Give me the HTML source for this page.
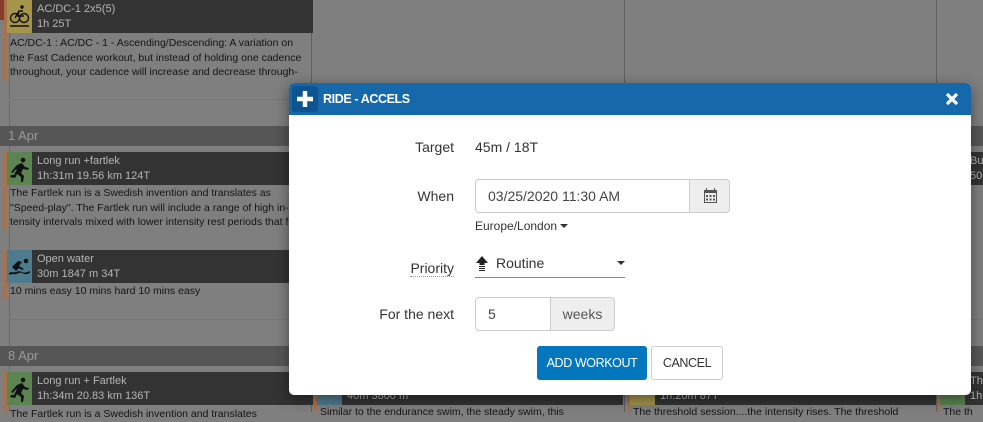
<!DOCTYPE html>
<html style="background:#7f7f7f"><head><meta charset="utf-8"><style>
*{box-sizing:border-box;margin:0;padding:0}
html,body{background:#7f7f7f}
body{width:983px;height:412px;overflow:hidden;font-family:"Liberation Sans",Arial,sans-serif;position:relative}
.a{position:absolute}
.vl{position:absolute;top:0;width:1px;height:412px;background:#5f5f5f}
.day{position:absolute;left:0;width:983px;height:20px;background:#565656;color:#9a9a9a;font-size:13px;line-height:20px;padding-left:8px}
.bar{position:absolute;width:3px;background:#a8714a}
.ch{position:absolute;height:33px;background:#333;color:#b5b5b5;font-size:11px;line-height:15px;padding:2px 0 0 30px;white-space:nowrap;overflow:hidden}
.ic{position:absolute;left:0;top:0;width:25px;height:33px}
.bt{position:absolute;color:#141414;font-size:10.5px;line-height:14.5px;white-space:nowrap;overflow:hidden}
.hl{position:absolute;height:1px;background:#767676}
</style></head><body>
<div class="a" style="left:0;top:0;width:983px;height:412px;background:#7f7f7f"></div>
<div class="vl" style="left:9px;background:#6a6a6a"></div>
<div class="vl" style="left:311px"></div>
<div class="vl" style="left:624px"></div>
<div class="vl" style="left:936px"></div>
<div class="a" style="left:0;top:0;width:4px;height:20px;background:#8a3a2a"></div>
<div class="hl" style="left:9px;top:99px;width:302px"></div>
<div class="hl" style="left:9px;top:319px;width:302px"></div>
<div class="hl" style="left:936px;top:319px;width:47px"></div>

<div class="bar" style="left:4px;top:0;height:79px"></div>
<div class="ch" style="left:7px;top:0;width:306px"><div class="ic" style="background:#a5954a"><svg width="25" height="33" viewBox="0 0 25 33"><g fill="none" stroke="#111" stroke-width="1.4"><circle cx="8" cy="18" r="4.5"/><circle cx="17" cy="18" r="4.5"/><path d="M8 18l4-7h4M12 11l-1 5h6"/><path d="M3 26h19"/></g><circle cx="15" cy="7" r="1.7" fill="#111"/></svg></div>AC/DC-1 2x5(5)<br>1h 25T</div>
<div class="bt" style="left:10px;top:36px;width:300px">AC/DC-1 : AC/DC - 1 - Ascending/Descending: A variation on<br>the Fast Cadence workout, but instead of holding one cadence<br>throughout, your cadence will increase and decrease through-</div>

<div class="day" style="top:126px">1 Apr</div>
<div class="bar" style="left:4px;top:152px;height:78px"></div>
<div class="ch" style="left:7px;top:152px;width:306px"><div class="ic" style="background:#5b8450"><svg width="25" height="33" viewBox="0 0 25 33"><g fill="#111"><circle cx="16" cy="8" r="2.3"/><path d="M10 13l5-2 3 4 4 1-1 2-5-1-2 4 3 3-1 6h-2l0-5-4-3-2 4-5-1 1-2 3 0 3-6-2 1-2 3-2-1z"/></g></svg></div>Long run +fartlek<br>1h:31m 19.56 km 124T</div>
<div class="bt" style="left:10px;top:186px;width:300px">The Fartlek run is a Swedish invention and translates as<br>"Speed-play". The Fartlek run will include a range of high in-<br>tensity intervals mixed with lower intensity rest periods that f</div>

<div class="bar" style="left:4px;top:250px;height:49px"></div>
<div class="ch" style="left:7px;top:250px;width:306px"><div class="ic" style="background:#4e7c8e"><svg width="25" height="33" viewBox="0 0 25 33"><g fill="#111"><circle cx="19" cy="11" r="2.3"/><path d="M5 17l6-6 4 1-3 4 5 3-2 1-3-2-3 3z"/><path d="M2 23c3-2 4 0 7-1s4-1 6 0 4 1 8-1v2c-4 2-6 1-8 0s-3 0-6 1-4-1-7 1z"/></g></svg></div>Open water<br>30m 1847 m 34T</div>
<div class="bt" style="left:10px;top:284px;width:300px">10 mins easy 10 mins hard 10 mins easy</div>

<div class="day" style="top:346px">8 Apr</div>
<div class="bar" style="left:4px;top:372px;height:40px"></div>
<div class="ch" style="left:7px;top:372px;width:306px"><div class="ic" style="background:#5b8450"><svg width="25" height="33" viewBox="0 0 25 33"><g fill="#111"><circle cx="16" cy="8" r="2.3"/><path d="M10 13l5-2 3 4 4 1-1 2-5-1-2 4 3 3-1 6h-2l0-5-4-3-2 4-5-1 1-2 3 0 3-6-2 1-2 3-2-1z"/></g></svg></div>Long run + Fartlek<br>1h:34m 20.83 km 136T</div>
<div class="bt" style="left:10px;top:407px;width:300px">The Fartlek run is a Swedish invention and translates</div>

<div class="bar" style="left:314px;top:372px;height:40px"></div>
<div class="ch" style="left:317px;top:372px;width:306px"><div class="ic" style="background:#4e7c8e"></div>Open water<br>40m 3800 m</div>
<div class="bt" style="left:320px;top:405px;width:300px">Similar to the endurance swim, the steady swim, this</div>
<div class="bar" style="left:627px;top:372px;height:40px"></div>
<div class="ch" style="left:630px;top:372px;width:306px"><div class="ic" style="background:#a5954a"></div>Threshold<br>1h:20m 87T</div>
<div class="bt" style="left:633px;top:405px;width:300px">The threshold session....the intensity rises. The threshold</div>
<div class="bar" style="left:937px;top:372px;height:40px"></div>
<div class="ch" style="left:940px;top:372px;width:43px"><div class="ic" style="background:#5b8450"></div>Thr<br>1h:</div>
<div class="bt" style="left:943px;top:405px;width:40px">The th</div>
<div class="ch" style="left:940px;top:152px;width:43px"><div class="ic" style="background:#333"></div>Bu<br>50r</div>
<div class="bt" style="left:944px;top:186px;width:39px;text-indent:-10px">ires<br>orte<br>The</div>

<div class="a" style="left:289px;top:83px;width:682px;height:312px;background:#fff;border-radius:5px;box-shadow:0 4px 14px rgba(0,0,0,.45);overflow:hidden">
  <div class="a" style="left:0;top:0;width:682px;height:32px;background:#1569ab"></div>
  <div class="a" style="left:3px;top:3px;width:26px;height:26px;background:#0e5490;border-radius:3px"><svg width="26" height="26"><path d="M13 5v16M5 13h16" stroke="#fff" stroke-width="4.5"/></svg></div>
  <div class="a" style="left:34px;top:9px;color:#fff;font-size:12.5px;font-weight:bold;letter-spacing:-0.4px">RIDE - ACCELS</div>
  <div class="a" style="left:656px;top:9px"><svg width="14" height="14"><path d="M2 2l10 10M12 2L2 12" stroke="#fff" stroke-width="3.2"/></svg></div>

  <div class="a" style="left:80px;top:56px;width:85px;text-align:right;font-size:14px;color:#333">Target</div>
  <div class="a" style="left:186px;top:56px;font-size:14px;color:#333">45m / 18T</div>

  <div class="a" style="left:80px;top:105px;width:85px;text-align:right;font-size:14px;color:#333">When</div>
  <div class="a" style="left:186px;top:96px;width:215px;height:34px;border:1px solid #ccc;border-radius:4px 0 0 4px;font-size:14px;color:#444;line-height:32px;padding-left:12px">03/25/2020 11:30 AM</div>
  <div class="a" style="left:400px;top:96px;width:41px;height:34px;border:1px solid #ccc;border-radius:0 4px 4px 0;background:#eee"><svg width="41" height="34"><g fill="#555"><rect x="14" y="10" width="13" height="3"/><rect x="14" y="13" width="1" height="10"/><rect x="26" y="13" width="1" height="10"/><rect x="14" y="22" width="13" height="1"/><rect x="16" y="15" width="2" height="2"/><rect x="19.5" y="15" width="2" height="2"/><rect x="23" y="15" width="2" height="2"/><rect x="16" y="18.5" width="2" height="2"/><rect x="19.5" y="18.5" width="2" height="2"/><rect x="23" y="18.5" width="2" height="2"/><rect x="16" y="8" width="1" height="3"/><rect x="24" y="8" width="1" height="3"/></g></svg></div>
  <div class="a" style="left:186px;top:136px;font-size:12px;color:#333">Europe/London <span style="display:inline-block;border-left:4px solid transparent;border-right:4px solid transparent;border-top:4px solid #333;vertical-align:2px"></span></div>

  <div class="a" style="left:80px;top:177px;width:85px;text-align:right;font-size:14px;color:#333"><span style="border-bottom:1px dotted #999">Priority</span></div>
  <div class="a" style="left:186px;top:168px;width:150px;height:27px;border-bottom:1px solid #888"></div>
  <div class="a" style="left:186px;top:172px"><svg width="14" height="16"><path d="M7 1L1 8h3.5v2h5V8H13z" fill="#222"/><path d="M4 11.5h6M4 13.5h6M4 15.5h6" stroke="#222" stroke-width="1"/></svg></div>
  <div class="a" style="left:207px;top:172px;font-size:14px;color:#333">Routine</div>
  <div class="a" style="left:328px;top:178px;border-left:4px solid transparent;border-right:4px solid transparent;border-top:4px solid #333"></div>

  <div class="a" style="left:60px;top:223px;width:105px;text-align:right;font-size:14px;color:#333">For the next</div>
  <div class="a" style="left:186px;top:214px;width:76px;height:34px;border:1px solid #ccc;border-radius:4px 0 0 4px;font-size:14px;color:#444;line-height:32px;padding-left:12px">5</div>
  <div class="a" style="left:261px;top:214px;width:65px;height:34px;border:1px solid #ccc;border-radius:0 4px 4px 0;background:#eee;font-size:14px;color:#555;line-height:32px;text-align:center">weeks</div>

  <div class="a" style="left:248px;top:263px;width:110px;height:34px;background:#0277bd;border-radius:3px;color:#fff;font-size:12.5px;letter-spacing:-0.4px;line-height:34px;text-align:center">ADD WORKOUT</div>
  <div class="a" style="left:362px;top:263px;width:72px;height:34px;border:1px solid #ccc;border-radius:3px;color:#333;font-size:12.5px;letter-spacing:-0.4px;line-height:32px;text-align:center">CANCEL</div>
</div>
</body></html>
